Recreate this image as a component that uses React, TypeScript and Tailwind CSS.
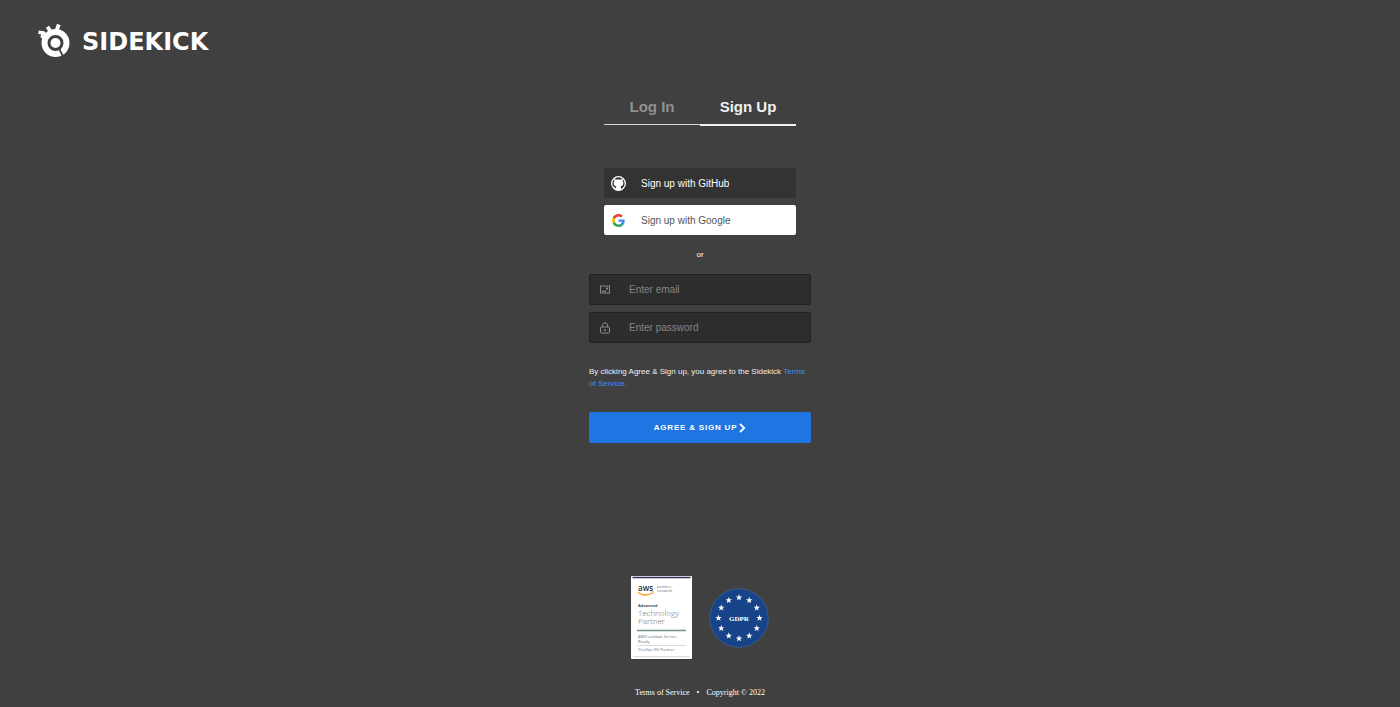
import React, { useState } from 'react';

type Tab = 'login' | 'signup';

interface IconFieldProps {
  id: string;
  type: string;
  placeholder: string;
  icon: React.ReactNode;
  value: string;
  onChange: (value: string) => void;
}

const LogoMark = () => (
  <svg className="w-[34px] h-[34px]" viewBox="0 0 34 34" fill="none" aria-hidden="true">
    <circle cx="17.500" cy="20" r="11" stroke="#fff" strokeWidth="6" />
    <circle cx="17.500" cy="20" r="5" fill="#fff" />
    <path d="M13 9.500L9.500 3.800M18.500 8L20.800 1.500" stroke="#fff" strokeWidth="3.800" />
    <path d="M8.500 13L5.500 9.800L.5 9.200" stroke="#fff" strokeWidth="3.400" />
    <path d="M4.200 10.500L3.800 15" stroke="#fff" strokeWidth="2.400" />
    <path d="M21 25.500L24.800 33" stroke="#404040" strokeWidth="1.800" />
  </svg>
);

const GithubIcon = () => (
  <svg className="w-[15px] h-[15px]" viewBox="0 0 30 30" aria-hidden="true">
    <circle cx="15" cy="15" r="13.600" fill="none" stroke="#fff" strokeWidth="2.600" />
    <path
      fill="#fff"
      d="M7 6c1.800-.2 3.400.6 4.600 1.500 2.200-.5 4.600-.5 6.800 0C19.600 6.600 21.200 5.800 23 6c.6 1.600.6 3 .2 4.200 1 1.200 1.500 2.500 1.500 4.200 0 4.300-2.500 5.900-5.700 6.300.7.700 1 1.600 1 2.800V28H10v-3.200c-2.800.5-3.600-.8-4.200-2-.3-.6-.7-1-1.300-1.500 1.500-.4 2.500.5 3.200 1.500.6.800 1.300.9 2.300.5.100-1.200.4-2 1-2.600-3.200-.4-5.700-2-5.700-6.300 0-1.700.5-3 1.500-4.200C6.400 9 6.400 7.600 7 6z"
    />
  </svg>
);

const GoogleIcon = () => (
  <svg className="w-[13px] h-[13px]" viewBox="0 0 48 48" aria-hidden="true">
    <path fill="#EA4335" d="M24 9.500c3.540 0 6.710 1.220 9.210 3.600l6.850-6.850C35.900 2.380 30.470 0 24 0 14.620 0 6.510 5.380 2.560 13.220l7.980 6.190C12.430 13.720 17.740 9.500 24 9.500z" />
    <path fill="#4285F4" d="M46.980 24.550c0-1.570-.15-3.090-.38-4.550H24v9.020h12.940c-.58 2.960-2.260 5.480-4.780 7.180l7.730 6c4.510-4.180 7.090-10.360 7.090-17.650z" />
    <path fill="#FBBC05" d="M10.530 28.590c-.48-1.450-.76-2.990-.76-4.590s.27-3.140.76-4.590l-7.980-6.190C.92 16.460 0 20.120 0 24c0 3.880.92 7.540 2.560 10.780l7.970-6.190z" />
    <path fill="#34A853" d="M24 48c6.480 0 11.930-2.130 15.890-5.810l-7.730-6c-2.150 1.450-4.920 2.300-8.160 2.300-6.260 0-11.570-4.220-13.470-9.910l-7.980 6.190C6.510 42.620 14.620 48 24 48z" />
  </svg>
);

const EmailIcon = () => (
  <svg className="w-[10px] h-[10px]" viewBox="0 0 20 20" fill="none" stroke="#8b8b8b" aria-hidden="true">
    <rect x="1" y="2" width="18" height="14" strokeWidth="2" />
    <path d="M4 12.500h8" strokeWidth="2.400" />
    <path d="M12 7h4" strokeWidth="4" />
  </svg>
);

const LockIcon = () => (
  <svg className="w-[10px] h-[12px]" viewBox="0 0 20 24" fill="none" stroke="#8b8b8b" aria-hidden="true">
    <rect x="1" y="10" width="18" height="12" rx="1.500" strokeWidth="2" />
    <path d="M5 10V6.500a5 5 0 0 1 10 0V10M10 14v4" strokeWidth="2" />
    <path d="M8 16h4" strokeWidth="2" />
  </svg>
);

const AwsBadge = () => (
  <svg className="w-[61px] h-[83px]" viewBox="0 0 61 83" role="img" aria-label="AWS Advanced Technology Partner">
    <rect width="61" height="83" rx="1" fill="#fff" />
    <path d="M1.500 1.500h58" stroke="#2b2d52" strokeWidth="1.400" />
    <g fontFamily="'Open Sans', sans-serif" fill="#6b7075">
      <text x="7" y="15" fontSize="8" fontWeight="600" fill="#232f3e">aws</text>
      <text x="26" y="12" fontSize="4">partner</text>
      <text x="26" y="16" fontSize="4">network</text>
      <text x="7" y="31" fontSize="4" fontWeight="700" fill="#454b54">Advanced</text>
      <text x="7" y="40" fontSize="8" fontWeight="300">Technology</text>
      <text x="7" y="48" fontSize="8" fontWeight="300">Partner</text>
      <text x="7" y="62" fontSize="4">AWS Lambda Service</text>
      <text x="7" y="67" fontSize="4">Ready</text>
      <text x="7" y="75" fontSize="4">DevOps ISV Partner</text>
    </g>
    <path d="M7 16.500c4.500 3 10 3 14 .5" fill="none" stroke="#f79a1f" strokeWidth="1.300" />
    <path d="M20 15.800l2.500-.1-.8 2.400" fill="none" stroke="#f79a1f" strokeWidth=".8" />
    <path d="M6 54.500h49" stroke="#6f918f" strokeWidth="1.400" />
    <path d="M6 69.500h49M2 80.500h57" stroke="#c9cdcf" strokeWidth=".7" />
  </svg>
);

const starAngles = [0, 30, 60, 90, 120, 150, 180, 210, 240, 270, 300, 330];

const GdprBadge = () => (
  <svg className="w-[60px] h-[60px]" viewBox="-30 -30 60 60" role="img" aria-label="GDPR">
    <circle r="29.300" fill="#174489" stroke="#3d6190" strokeWidth=".8" />
    {starAngles.map((angle) => (
      <path
        key={angle}
        transform={`rotate(${angle}) translate(0 -20.500) rotate(${-angle})`}
        fill="#fff"
        d="M0-3.400L.8-1.100 3.200-1.100 1.300.4 2 2.800 0 1.400-2 2.800-1.300.4-3.200-1.100-.8-1.100z"
      />
    ))}
    <text y="3" textAnchor="middle" fontFamily="'Liberation Serif', serif" fontSize="7" fontWeight="700" fill="#fff">
      GDPR
    </text>
  </svg>
);

const IconField: React.FC<IconFieldProps> = ({ id, type, placeholder, icon, value, onChange }) => (
  <div className="flex items-center h-[31px] rounded-xs border border-[#222222] bg-[#2d2d2d]">
    <label htmlFor={id} aria-label={placeholder} className="w-[30px] flex shrink-0 justify-center">
      {icon}
    </label>
    <input
      id={id}
      type={type}
      placeholder={placeholder}
      value={value}
      onChange={(e) => onChange(e.target.value)}
      className="min-w-0 flex-1 h-full ml-[9px] bg-transparent text-[10px] text-white placeholder:text-[#858585] outline-none"
    />
  </div>
);

const App: React.FC = () => {
  const [tab, setTab] = useState<Tab>('signup');
  const [email, setEmail] = useState('');
  const [password, setPassword] = useState('');

  const action = tab === 'signup' ? 'Sign up' : 'Log in';

  return (
    <div className="min-h-screen flex flex-col bg-[#404040] font-['Liberation_Sans',Arial,sans-serif] text-white">
      {/* Header */}
      <header className="flex px-[38px] pt-[23px]">
        <a href="#" className="flex items-start gap-[10px]">
          <LogoMark />
          <span className="font-['DejaVu_Sans',sans-serif] text-[24px] leading-[38px] font-bold">SIDEKICK</span>
        </a>
      </header>

      <main className="w-[222px] mx-auto pt-[29px]">
        {/* Tabs */}
        <div className="flex items-start mx-[15px] text-[15px] font-bold">
          <button
            type="button"
            onClick={() => setTab('login')}
            className={`flex-1 h-[35px] ${tab === 'login' ? 'border-b-2 border-[#f0f0f0] text-[#f0f0f0]' : 'border-b border-[#d5d5d5] text-[#919191]'}`}
          >
            Log In
          </button>
          <button
            type="button"
            onClick={() => setTab('signup')}
            className={`flex-1 h-[36px] ${tab === 'signup' ? 'border-b-2 border-[#f0f0f0] text-[#f0f0f0]' : 'border-b border-[#d5d5d5] text-[#919191]'}`}
          >
            Sign Up
          </button>
        </div>

        {/* Social buttons */}
        <div className="mx-[15px] mt-[42px] space-y-[7px] text-[10px]">
          <button type="button" className="w-full h-[30px] flex items-center gap-[15px] px-[7px] rounded-xs bg-[#333333]">
            <GithubIcon />
            <span>{action} with GitHub</span>
          </button>
          <button type="button" className="w-full h-[30px] flex items-center gap-[16px] px-[8px] rounded-xs bg-white text-[#555555]">
            <GoogleIcon />
            <span>{action} with Google</span>
          </button>
        </div>

        <p className="mt-[14px] mb-[13px] text-center text-[8px] leading-[12px]">or</p>

        {/* Form */}
        <form onSubmit={(e) => e.preventDefault()}>
          <div className="space-y-[7px]">
            <IconField id="email" type="email" placeholder="Enter email" icon={<EmailIcon />} value={email} onChange={setEmail} />
            <IconField id="password" type="password" placeholder="Enter password" icon={<LockIcon />} value={password} onChange={setPassword} />
          </div>

          <p className="mt-[23px] text-[8px] leading-[12px] text-[#eeeeee]">
            By clicking Agree &amp; Sign up, you agree to the Sidekick{' '}
            <a href="#terms" className="text-[#3f8cf4]">Terms of Service.</a>
          </p>

          <button
            type="submit"
            className="w-full h-[31px] mt-[22px] flex items-center justify-center gap-[2px] rounded-xs bg-[#1f76e3] text-[8px] font-bold tracking-widest"
          >
            AGREE &amp; SIGN UP
            <svg className="w-[7px] h-[10px]" viewBox="0 0 7 10" fill="none" stroke="#fff" strokeWidth="1.800" aria-hidden="true">
              <path d="M1 .8L5.200 5 1 9.200" />
            </svg>
          </button>
        </form>
      </main>

      {/* Footer */}
      <footer className="mt-auto pb-[8px] font-['Liberation_Serif',serif] text-[8px] leading-[12px]">
        <div className="flex items-center justify-center gap-[17px] mb-[28px]">
          <AwsBadge />
          <GdprBadge />
        </div>
        <div className="flex justify-center gap-[7px]">
          <a href="#terms">Terms of Service</a>
          <span>•</span>
          <span>Copyright © 2022</span>
        </div>
      </footer>
    </div>
  );
};

export default App;
